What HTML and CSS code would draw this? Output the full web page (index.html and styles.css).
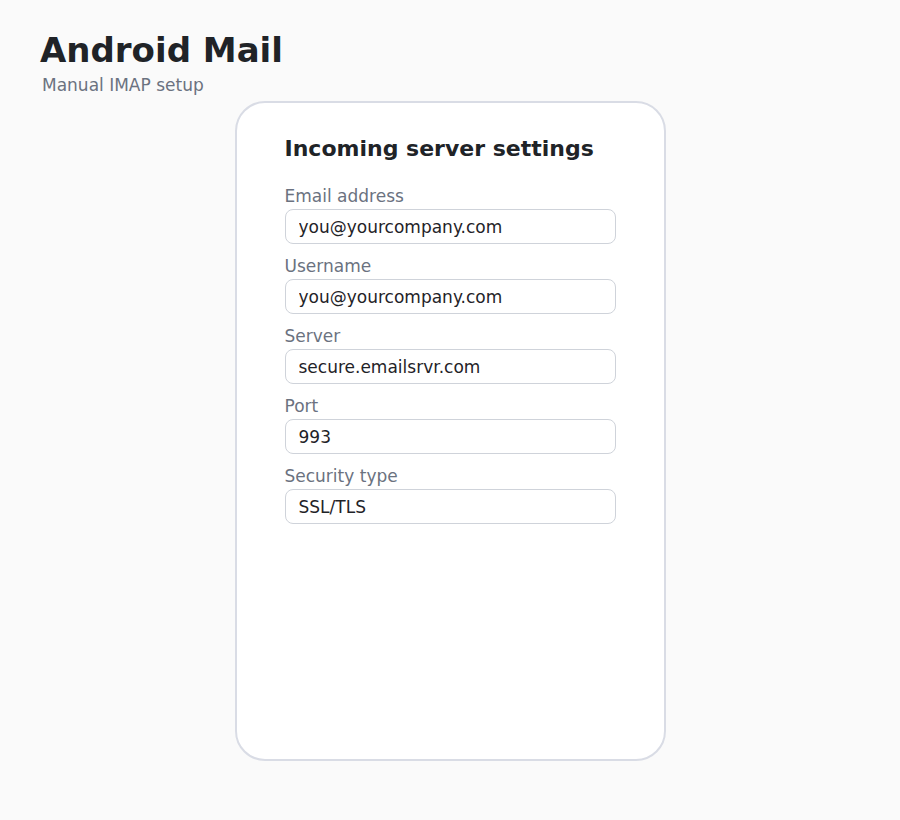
FILE: index.html
```html
<!DOCTYPE html>
<html lang="en">
<head>
<meta charset="utf-8">
<title>Android Mail</title>
<link rel="stylesheet" href="styles.css">
</head>
<body>
  <main class="page">
    <header class="page-header">
      <h1 class="app-title">Android Mail</h1>
      <p class="app-subtitle">Manual IMAP setup</p>
    </header>

    <section class="phone-card">
      <h2 class="card-title">Incoming server settings</h2>
      <form class="settings-form">
        <label class="field">
          <span class="field-label">Email address</span>
          <input class="field-input" type="text" value="you@yourcompany.com">
        </label>
        <label class="field">
          <span class="field-label">Username</span>
          <input class="field-input" type="text" value="you@yourcompany.com">
        </label>
        <label class="field">
          <span class="field-label">Server</span>
          <input class="field-input" type="text" value="secure.emailsrvr.com">
        </label>
        <label class="field">
          <span class="field-label">Port</span>
          <input class="field-input" type="text" value="993">
        </label>
        <label class="field">
          <span class="field-label">Security type</span>
          <input class="field-input" type="text" value="SSL/TLS">
        </label>
      </form>
    </section>
  </main>
</body>
</html>
```
FILE: styles.css
```css
* {
  box-sizing: border-box;
}

html,
body {
  margin: 0;
  padding: 0;
  background: #fafafa;
}

body {
  font-family: "DejaVu Sans", "Liberation Sans", sans-serif;
  color: #1f2328;
}

.page {
  padding: 28px 40px 60px;
  display: flex;
  flex-direction: column;
}

.page-header {
  display: flex;
  flex-direction: column;
}

.app-title {
  margin: 0;
  font-size: 34px;
  line-height: 44px;
  font-weight: 700;
  color: #202327;
}

.app-subtitle {
  margin: 2px 0 0 2px;
  font-size: 17px;
  line-height: 22px;
  color: #6b7280;
}

.phone-card {
  align-self: center;
  width: 431px;
  height: 660px;
  margin-top: 5px;
  background: #ffffff;
  border: 2px solid #d9dce5;
  border-radius: 30px;
  padding: 31px 48px;
}

.card-title {
  margin: 0 0 19px;
  font-size: 22px;
  line-height: 30px;
  font-weight: 700;
  color: #202327;
}

.settings-form {
  display: flex;
  flex-direction: column;
  gap: 9px;
}

.field {
  display: flex;
  flex-direction: column;
}

.field-label {
  font-size: 17px;
  line-height: 26px;
  color: #6b7280;
}

.field-input {
  width: 100%;
  height: 35px;
  padding: 0 13px;
  border: 1px solid #cfd3da;
  border-radius: 8px;
  background: #ffffff;
  font-family: inherit;
  font-size: 17px;
  color: #1f2328;
  outline: none;
}
```
